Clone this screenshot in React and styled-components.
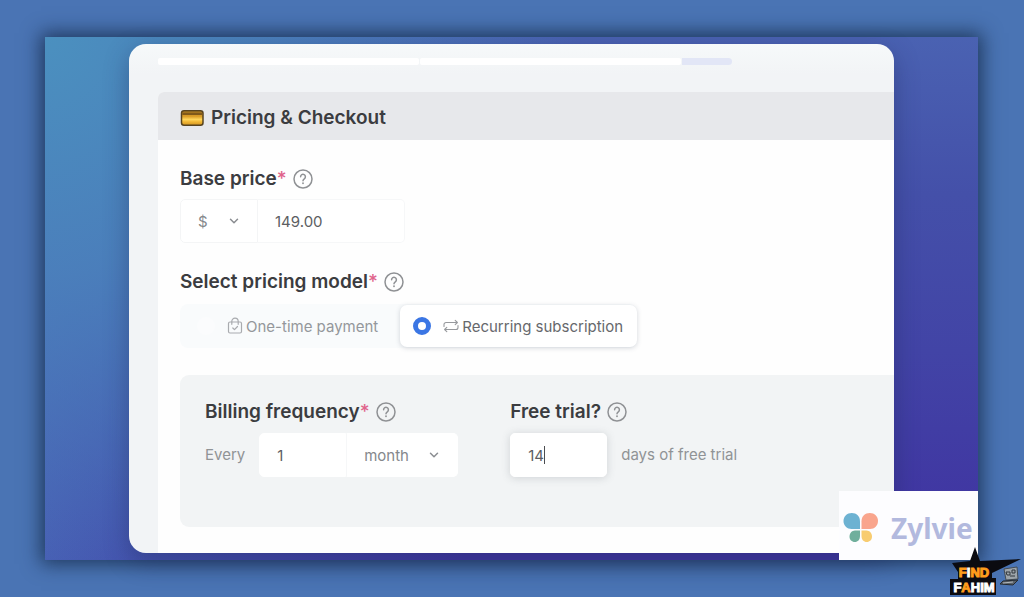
import React from "react";
import styled, { createGlobalStyle, css } from "styled-components";

const GlobalStyle = createGlobalStyle`
  * { box-sizing: border-box; }
  body {
    margin: 0;
    font-family: Inter, "Liberation Sans", sans-serif;
    font-optical-sizing: none;
    color: #3b3c40;
    background: #4a74b4;
  }
  button, input, select { font: inherit; font-optical-sizing: none; color: inherit; }
`;

const Page = styled.div`
  position: relative;
  min-height: 100vh;
  padding: 37px 46px 37px 45px;
  overflow: hidden;
`;

const Frame = styled.main`
  position: relative;
  padding: 7px 84px;
  background:
    linear-gradient(90deg, rgba(72, 100, 182, 0.9) 0%, rgba(70, 96, 180, 0.7) 10%, rgba(70, 90, 180, 0) 45%),
    linear-gradient(180deg, #4a62b2 0%, #4450a9 30%, #4244a6 60%, #4036a2 90%);
  box-shadow: 0 0 18px 4px rgba(18, 38, 66, 0.75);

  &::before {
    content: "";
    position: absolute;
    inset: 0;
    background: radial-gradient(circle at 0% 0%, #4b90bf 0%, rgba(75, 130, 188, 0.9) 22%, rgba(72, 110, 184, 0) 50%);
  }
`;

const Card = styled.div`
  position: relative;
  background: linear-gradient(180deg, #f6f9fa 0, #f2f4f6 30px);
  border-radius: 17px;
  overflow: hidden;
  padding: 14px 0 0 29px;
  box-shadow: 0 8px 24px rgba(30, 40, 90, 0.4);
`;

const Progress = styled.div`
  display: flex;
  width: 78%;
  height: 7px;
  margin-bottom: 27px;
  gap: 1px;
`;

const Step = styled.span`
  flex: ${(p) => p.$grow} 1 0;
  background: ${(p) => (p.$active ? "#e2e6f6" : "#ffffff")};
  border-radius: ${(p) => (p.$active ? "0 4px 4px 0" : "2px")};
`;

const Section = styled.section`
  background: #fefefe;
  border-top-left-radius: 6px;
  overflow: hidden;
`;

const SectionHeader = styled.header`
  display: flex;
  align-items: center;
  gap: 7px;
  height: 48px;
  padding: 3px 22px 0;
  background: #e7e8eb;
`;

const Title = styled.h1`
  margin: 0;
  font-size: 19px;
  line-height: 24px;
  font-weight: 600;
`;

const Form = styled.form`
  display: flex;
  flex-direction: column;
  gap: 27px;
  padding: 27px 0 26px 22px;
`;

const Field = styled.div`
  display: flex;
  flex-direction: column;
  gap: ${(p) => p.$gap || 8}px;
`;

const LabelRow = styled.div`
  display: flex;
  align-items: center;
  gap: 6px;
  height: 24px;
`;

const labelText = css`
  font-size: 19px;
  line-height: 24px;
  font-weight: 600;
  white-space: nowrap;
`;

const Label = styled.label`
  ${labelText}
`;

const GroupLabel = styled.span`
  ${labelText}
`;

const Required = styled.span`
  color: #e0648c;
  font-weight: 500;
`;

const HelpButton = styled.button`
  display: flex;
  padding: 0;
  border: 0;
  background: none;
  color: #8f9194;
`;

const Controls = styled.div`
  display: flex;
  align-items: center;
`;

const SelectBox = styled.div`
  position: relative;
  width: ${(p) => p.$width}px;
  height: 44px;
  color: #85888c;
  svg {
    position: absolute;
    top: 16px;
    right: 18px;
    pointer-events: none;
  }
`;

const Select = styled.select`
  appearance: none;
  width: 100%;
  height: 100%;
  padding: 0 17px;
  font-size: 15px;
  background: #ffffff;
  border: 1px solid ${(p) => (p.$outlined ? "#f4f5f6" : "#ffffff")};
  border-left-color: ${(p) => (p.$outlined ? "#f4f5f6" : "#f6f7f8")};
  border-radius: ${(p) => (p.$outlined ? "5px 0 0 5px" : "0 5px 5px 0")};
`;

const TextInput = styled.input`
  width: ${(p) => p.$width}px;
  height: 44px;
  padding: 0 17px;
  font-size: 15px;
  color: #5c5e62;
  background: #ffffff;
  outline: 0;
  border: 1px solid ${(p) => (p.$outlined ? "#f6f7f8" : "#ffffff")};
  border-left-width: ${(p) => (p.$outlined ? 0 : 1)}px;
  border-radius: ${(p) => p.$radius || "5px"};
`;

const FocusBox = styled.div`
  position: relative;
  border-radius: 5px;
  box-shadow: 0 1px 9px rgba(80, 90, 100, 0.22);
  line-height: 0;
`;

const Caret = styled.span`
  position: absolute;
  top: 13px;
  left: 34px;
  width: 1px;
  height: 18px;
  background: #4b4d50;
`;

const Segments = styled.div`
  display: flex;
  align-items: center;
  width: max-content;
  height: 44px;
  background: #f9fbfc;
  border-radius: 8px;
`;

const Segment = styled.label`
  display: flex;
  align-items: center;
  height: 42px;
  padding: ${(p) => (p.$selected ? "0 14px 0 13px" : "0 22px 0 17px")};
  font-size: 15px;
  border-radius: 7px;
  white-space: nowrap;
  color: ${(p) => (p.$selected ? "#66686c" : "#94979b")};
  ${(p) =>
    p.$selected &&
    css`
      background: #ffffff;
      box-shadow: 0 1px 5px rgba(60, 70, 90, 0.22);
    `}
  svg { margin: 0 3px 0 12px; }
`;

const Radio = styled.input`
  appearance: none;
  width: 18px;
  height: 18px;
  margin: 0;
  border-radius: 50%;
  border: 5px solid transparent;
  background: #fbfcfd;
  &:checked {
    border-color: #3b76e4;
    background: #ffffff;
  }
`;

const Panel = styled.div`
  display: flex;
  gap: 52px;
  padding: 25px 25px 50px;
  background: #f2f4f5;
  border-radius: 9px 0 0 9px;
`;

const Muted = styled.span`
  font-size: 15px;
  line-height: 24px;
  color: #909396;
  white-space: nowrap;
  padding: ${(p) => (p.$after ? "0 0 0 14px" : "0 14px 0 0")};
`;

const Brand = styled.div`
  position: absolute;
  right: 0;
  bottom: 0;
  display: flex;
  align-items: center;
  gap: 12px;
  width: 139px;
  height: 69px;
  padding: 4px 4px 0;
  background: #fdfdff;
  svg { flex: none; }
`;

const BrandName = styled.span`
  font-family: "Noto Sans", "Open Sans", sans-serif;
  font-size: 28px;
  line-height: 36px;
  font-weight: 700;
  color: #b2b9de;
`;

const Badge = styled.div`
  position: absolute;
  right: 0;
  bottom: 0;
  width: 76px;
  height: 51px;
`;

const BadgeArt = styled.svg`
  display: block;
`;

const BadgeText = styled.div`
  position: absolute;
  left: 4px;
  bottom: 2px;
  width: 44px;
  text-align: center;
  font-family: "Liberation Sans", sans-serif;
  font-size: 13px;
  line-height: 15px;
  font-weight: 700;
  color: #ffffff;
  -webkit-text-stroke: 1px currentColor;
  b { color: #ff9d1c; }
`;

const Help = () => (
  <HelpButton type="button" aria-label="Help">
    <svg width="20" height="20" viewBox="0 0 20 20" fill="none" stroke="currentColor" strokeWidth="1.5" strokeLinecap="round" strokeLinejoin="round">
      <circle cx="10" cy="10" r="9" />
      <path d="M7.6 7.8a2.4 2.4 0 1 1 3.7 2c-.9.6-1.3 1-1.3 2" />
      <path d="M10 14.2v.1" strokeWidth="1.8" />
    </svg>
  </HelpButton>
);

const Chevron = () => (
  <svg width="12" height="12" viewBox="0 0 12 12" fill="none" stroke="#8b8e92" strokeWidth="1.5" strokeLinecap="round" strokeLinejoin="round">
    <path d="M2.5 4.2 6 7.7l3.5-3.5" />
  </svg>
);

const BagIcon = () => (
  <svg width="16" height="18" viewBox="0 0 16 18" fill="none" stroke="#a9abaf" strokeWidth="1.2" strokeLinecap="round" strokeLinejoin="round">
    <rect x="1.5" y="5" width="13" height="11" rx="1.5" />
    <path d="M4.8 7.300V4.400a3.200 3.200 0 0 1 6.400 0v2.900M5.800 11l1.700 1.700 3-3.200" />
  </svg>
);

const RepeatIcon = () => (
  <svg width="16" height="14" viewBox="0 0 16 14" fill="none" stroke="#97999d" strokeWidth="1.1" strokeLinecap="round" strokeLinejoin="round">
    <path d="M1 7.500V5.500a2 2 0 0 1 2-2h11M12.200 1.300 14.400 3.500l-2.200 2.200M15 6.500v2a2 2 0 0 1-2 2H2M3.800 8.300 1.600 10.500l2.200 2.200" />
  </svg>
);

const CardIcon = () => (
  <svg width="24" height="18" viewBox="0 0 24 18" aria-hidden="true">
    <defs>
      <linearGradient id="gold" x1="0" y1="0" x2="0" y2="1">
        <stop offset="0" stopColor="#b98420" />
        <stop offset="0.4" stopColor="#dda02a" />
        <stop offset="0.6" stopColor="#ffd65c" />
        <stop offset="0.75" stopColor="#f2b836" />
        <stop offset="1" stopColor="#d0921f" />
      </linearGradient>
    </defs>
    <rect x="1.5" y="1.7" width="21.500" height="14.600" rx="2.500" fill="url(#gold)" stroke="#57431f" strokeWidth="1.500" />
    <path d="M2.300 4.800h20" stroke="#80591a" strokeWidth="2.600" />
  </svg>
);

const Butterfly = () => (
  <svg width="36" height="31" viewBox="0 0 36 31" aria-hidden="true">
    <path d="M17 17V9.500C17 4 13.500 1 8.800 1 4 1 .5 4.500.5 9s3.500 8 8 8z" fill="#6db2d2" />
    <path d="M18.500 17V9.500C18.500 4 22 1 26.800 1c4.700 0 8.200 3.500 8.200 8s-3.500 8-8 8z" fill="#f9a58d" />
    <path d="M17 18.500v5.500c0 3.800-2.200 6-5.200 6-3 0-5.300-2.300-5.300-5.500s2.300-6 5.500-6z" fill="#70af9c" />
    <path d="M18.500 18.500v5.500c0 3.800 2.200 6 5.200 6 3 0 5.300-2.300 5.300-5.500s-2.300-6-5.500-6z" fill="#f8cc70" />
  </svg>
);

export default function App() {
  return (
    <Page>
      <GlobalStyle />
      <Frame>
        <Card>
          <Progress>
            <Step $grow={26} />
            <Step $grow={26} />
            <Step $grow={5} $active />
          </Progress>
          <Section>
            <SectionHeader>
              <CardIcon />
              <Title>Pricing &amp; Checkout</Title>
            </SectionHeader>
            <Form>
              <Field>
                <LabelRow>
                  <Label htmlFor="price">Base price<Required>*</Required></Label>
                  <Help />
                </LabelRow>
                <Controls>
                  <SelectBox $width={78}>
                    <Select $outlined aria-label="Currency"><option>$</option></Select>
                    <Chevron />
                  </SelectBox>
                  <TextInput id="price" $outlined $width={147} $radius="0 5px 5px 0" defaultValue="149.00" />
                </Controls>
              </Field>
              <Field $gap={10}>
                <LabelRow>
                  <GroupLabel id="model">Select pricing model<Required>*</Required></GroupLabel>
                  <Help />
                </LabelRow>
                <Segments role="radiogroup" aria-labelledby="model">
                  <Segment>
                    <Radio type="radio" name="model" />
                    <BagIcon />
                    One-time payment
                  </Segment>
                  <Segment $selected>
                    <Radio type="radio" name="model" defaultChecked />
                    <RepeatIcon />
                    Recurring subscription
                  </Segment>
                </Segments>
              </Field>
              <Panel>
                <Field $gap={9}>
                  <LabelRow>
                    <Label htmlFor="every">Billing frequency<Required>*</Required></Label>
                    <Help />
                  </LabelRow>
                  <Controls>
                    <Muted>Every</Muted>
                    <TextInput id="every" $width={87} $radius="5px 0 0 5px" defaultValue="1" />
                    <SelectBox $width={112}>
                      <Select aria-label="Billing period"><option>month</option></Select>
                      <Chevron />
                    </SelectBox>
                  </Controls>
                </Field>
                <Field $gap={9}>
                  <LabelRow>
                    <Label htmlFor="trial">Free trial?</Label>
                    <Help />
                  </LabelRow>
                  <Controls>
                    <FocusBox>
                      <TextInput id="trial" $width={97} defaultValue="14" />
                      <Caret />
                    </FocusBox>
                    <Muted $after>days of free trial</Muted>
                  </Controls>
                </Field>
              </Panel>
            </Form>
          </Section>
        </Card>
        <Brand>
          <Butterfly />
          <BrandName>Zylvie</BrandName>
        </Brand>
      </Frame>
      <Badge>
        <BadgeArt width="76" height="51" viewBox="0 0 76 51" aria-hidden="true">
          <path d="M27 1 32 15 73 13 44 27v5h4v17H2V33h8V26L4 17l18-2z" fill="#0b0b10" />
          <path d="M56 23 69 21l1 12-12 1z" fill="#9da4aa" stroke="#454c53" />
          <path d="M58 26h4v3h-3zM64 24h3v3h-3zM62 30h5" stroke="#30363c" fill="none" />
          <path d="M55 35 70 34l-5 5-13-1z" fill="#5a6168" stroke="#252a30" />
          <path d="M55 37l10-1" stroke="#b2b8bd" />
        </BadgeArt>
        <BadgeText>
          <div><b>F</b>I<b>ND</b></div>
          <div>F<b>A</b>HIM</div>
        </BadgeText>
      </Badge>
    </Page>
  );
}
